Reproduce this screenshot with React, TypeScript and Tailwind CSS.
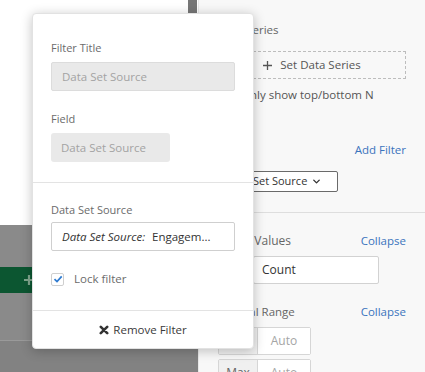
import { ChevronDown } from "lucide-react";

const Label = ({ children }: { children: React.ReactNode }) => (
  <div className="text-[11px] leading-[16px] text-[#6b6b6b]">{children}</div>
);

const FilterPopover = () => {
  return (
    <div className="absolute left-[32px] top-[13px] w-[222px] h-[336px] bg-white rounded-[4px] border border-[#e2e2e2] shadow-[0_2px_12px_rgba(0,0,0,0.24)] flex flex-col">
      <div className="px-[18px] pt-[26px] pb-[20px] border-b border-[#e3e3e3]">
        <Label>Filter Title</Label>
        <div className="mt-[6px] h-[29px] w-full rounded-[2px] border border-[#dcdcdc] bg-[#e9e9e9] px-[10px] flex items-center text-[11.5px] text-[#a3a3a3]">
          Data Set Source
        </div>
        <div className="mt-[20px]">
          <Label>Field</Label>
        </div>
        <div className="mt-[6px] h-[29px] w-[119px] rounded-[3px] bg-[#e9e9e9] px-[10px] flex items-center text-[11.5px] text-[#a3a3a3]">
          Data Set Source
        </div>
      </div>

      <div className="px-[18px] pt-[19px] pb-[23px] border-b border-[#e3e3e3]">
        <Label>Data Set Source</Label>
        <div className="mt-[4px] h-[29px] w-full rounded-[2px] border border-[#cfcfcf] bg-white px-[10px] flex items-center gap-[7px] text-[11.5px] text-[#333] whitespace-nowrap overflow-hidden">
          <span className="italic">Data Set Source:</span>
          <span>Engagem...</span>
        </div>
        <div className="mt-[20px] flex items-center gap-[10px]">
          <div className="w-[13px] h-[13px] border border-[#cfcfcf] rounded-[2px] bg-white flex items-center justify-center">
            <svg width="10" height="10" viewBox="0 0 10 10">
              <path d="M1.5 5.2 L4 7.6 L8.7 2.4" fill="none" stroke="#2d7ad0" strokeWidth="1.7" />
            </svg>
          </div>
          <span className="text-[11.5px] leading-[16px] text-[#6b6b6b]">Lock filter</span>
        </div>
      </div>

      <div className="flex-1 flex items-center justify-center gap-[4px] text-[11.5px] text-[#3a3a3a]">
        <svg width="10" height="10" viewBox="0 0 10 10">
          <path d="M1.8 1.8 L8.2 8.2 M8.2 1.8 L1.8 8.2" stroke="#333" strokeWidth="2.6" strokeLinecap="round" />
        </svg>
        <span>Remove Filter</span>
      </div>
    </div>
  );
};

const App = () => {
  return (
    <div className="relative w-[425px] h-[372px] overflow-hidden flex bg-white font-['Open_Sans',sans-serif]">
      {/* left canvas, dimmed */}
      <div className="relative w-[198px] flex flex-col">
        <div className="h-[225px] bg-white" />
        <div className="h-[42px] bg-[#8a8a8a]" />
        <div className="h-[26px] bg-[#0c5631] flex items-center pl-[24px]">
          <svg width="10" height="10" viewBox="0 0 10 10">
            <path d="M5 0 V10 M0 5 H10" stroke="#7fa58c" strokeWidth="2.2" />
          </svg>
        </div>
        <div className="h-[48px] bg-[#8a8a8a] border-b border-[#9a9a9a]" />
        <div className="flex-1 bg-[#828282]" />
        <div className="absolute right-[1px] top-0 w-[9px] h-[14px] bg-[#777]" />
      </div>

      {/* right settings panel */}
      <div className="flex-1 bg-[#f8f8f8] border-l border-[#e8e8e8] px-[19px] pt-[22px] text-[11.5px]">
        <div className="leading-[16px] text-[#666]">Data Series</div>
        <div className="mt-[13px] h-[28px] border border-dashed border-[#bdbdbd] flex items-center justify-center gap-[8px] text-[#555]">
          <svg width="9" height="9" viewBox="0 0 9 9">
            <path d="M4.5 0 V9 M0 4.5 H9" stroke="#555" strokeWidth="1.3" />
          </svg>
          <span>Set Data Series</span>
        </div>
        <div className="mt-[8px] flex items-center gap-[10px] leading-[16px] text-[#555]">
          <div className="w-[13px] h-[13px] border border-[#ccc] bg-white" />
          <span>Only show top/bottom N</span>
        </div>

        <div className="mt-[39px] flex justify-between leading-[16px]">
          <span className="text-[#666]">Filters</span>
          <span className="text-[#3b74bd]">Add Filter</span>
        </div>
        <div className="mt-[13px] w-[120px] h-[21px] border border-[#6a6a6a] rounded-[2px] bg-white flex items-center gap-[4px] px-[7px] text-[11px] text-[#333]">
          <span>Data Set Source</span>
          <ChevronDown size={11} strokeWidth={3} />
        </div>

        <div className="-mx-[19px] mt-[20px] border-t border-[#dedede]" />

        <div className="mt-[20px] flex justify-between leading-[16px]">
          <span className="text-[12px] text-[#666]">Y-Axis Values</span>
          <span className="text-[#3b74bd]">Collapse</span>
        </div>
        <div className="mt-[7px] ml-[35px] w-[126px] h-[28px] border border-[#d2d2d2] rounded-[2px] bg-white flex items-center px-[8px] text-[12px] text-[#333]">
          Count
        </div>

        <div className="mt-[20px] flex justify-between leading-[16px]">
          <span className="text-[#666]">Interval Range</span>
          <span className="text-[#3b74bd]">Collapse</span>
        </div>
        <div className="mt-[7px] flex h-[28px] w-[93px] border border-[#d6d6d6] rounded-[2px] text-[12px]">
          <div className="w-[39px] bg-[#f0f0f0] border-r border-[#d6d6d6] flex items-center justify-center text-[#666]">Min</div>
          <div className="flex-1 bg-white flex items-center justify-center text-[#a5a5a5]">Auto</div>
        </div>
        <div className="mt-[4px] flex h-[28px] w-[93px] border border-[#d6d6d6] rounded-[2px] text-[12px]">
          <div className="w-[39px] bg-[#f0f0f0] border-r border-[#d6d6d6] flex items-center justify-center text-[#666]">Max</div>
          <div className="flex-1 bg-white flex items-center justify-center text-[#a5a5a5]">Auto</div>
        </div>
      </div>

      <FilterPopover />
    </div>
  );
};

export default App;
